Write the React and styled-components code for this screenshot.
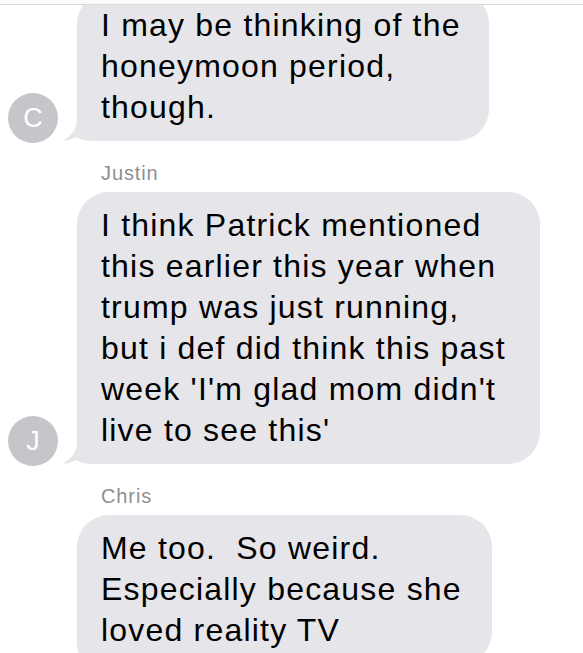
import React from "react";
import styled, { createGlobalStyle } from "styled-components";

const GlobalStyle = createGlobalStyle`
  html, body {
    margin: 0;
    padding: 0;
    background: #ffffff;
  }
  body {
    font-family: "Liberation Sans", Arial, sans-serif;
    -webkit-font-smoothing: antialiased;
  }
`;

const Screen = styled.div`
  width: 583px;
  height: 653px;
  overflow: hidden;
  display: flex;
  flex-direction: column;
  background: #ffffff;
`;

const TopBar = styled.div`
  flex: none;
  height: 4px;
  border-bottom: 1px solid #d9d9dc;
  background: #fbfbfb;
  position: relative;
  z-index: 2;
`;

const Thread = styled.div`
  display: flex;
  flex-direction: column;
  margin-top: -13px;
`;

const Group = styled.div`
  display: flex;
  flex-direction: column;
  margin-top: ${({ $gap }) => $gap || 0}px;
`;

const Sender = styled.div`
  margin-left: 101px;
  margin-bottom: 9px;
  height: 20px;
  line-height: 20px;
  font-size: 20px;
  letter-spacing: 0.9px;
  color: #8e8e93;
`;

const Row = styled.div`
  display: flex;
  align-items: flex-end;
  padding-left: 8px;
  gap: 19px;
`;

const Avatar = styled.div`
  flex: none;
  width: 50px;
  height: 50px;
  margin-bottom: -2px;
  border-radius: 50%;
  background: ${({ $hidden }) => ($hidden ? "transparent" : "#c5c5ca")};
  color: #ffffff;
  display: flex;
  align-items: center;
  justify-content: center;
  font-size: 27px;
  font-weight: 300;
`;

const Bubble = styled.div`
  position: relative;
  box-sizing: border-box;
  width: ${({ $width }) => $width}px;
  padding: 13px 20px 13px 24px;
  border-radius: 32px 32px 32px 20px;
  background: #e5e5ea;
  color: #000000;
  font-size: 32px;
  line-height: 41px;
  letter-spacing: 1.2px;
  white-space: pre;
`;

const Tail = styled.svg`
  position: absolute;
  left: -14px;
  bottom: 0;
  width: 36px;
  height: 30px;
`;

const BubbleTail = () => (
  <Tail viewBox="0 0 36 30">
    <path
      d="M14 0 H36 V30 H30 C24 30 18 29 13 26 C9 28.5 4 29.6 0 29.6 C6 26 14 20 14 8 Z"
      fill="#e5e5ea"
    />
  </Tail>
);

const Message = ({ name, initial, width, lines, gap, last = true }) => (
  <Group $gap={gap}>
    {name && <Sender>{name}</Sender>}
    <Row>
      <Avatar $hidden={!last}>{last ? initial : ""}</Avatar>
      <Bubble $width={width}>
        {last && <BubbleTail />}
        {lines.map((line, i) => (
          <React.Fragment key={i}>
            {line}
            {i < lines.length - 1 && <br />}
          </React.Fragment>
        ))}
      </Bubble>
    </Row>
  </Group>
);

export default function App() {
  return (
    <Screen>
      <GlobalStyle />
      <TopBar />
      <Thread>
        <Message
          initial="C"
          width={412}
          lines={["I may be thinking of the", "honeymoon period,", "though."]}
        />
        <Message
          gap={22}
          name="Justin"
          initial="J"
          width={463}
          lines={[
            "I think Patrick mentioned",
            "this earlier this year when",
            "trump was just running,",
            "but i def did think this past",
            "week 'I'm glad mom didn't",
            "live to see this'",
          ]}
        />
        <Message
          gap={22}
          name="Chris"
          initial="C"
          width={415}
          last={false}
          lines={["Me too.  So weird.", "Especially because she", "loved reality TV"]}
        />
      </Thread>
    </Screen>
  );
}
